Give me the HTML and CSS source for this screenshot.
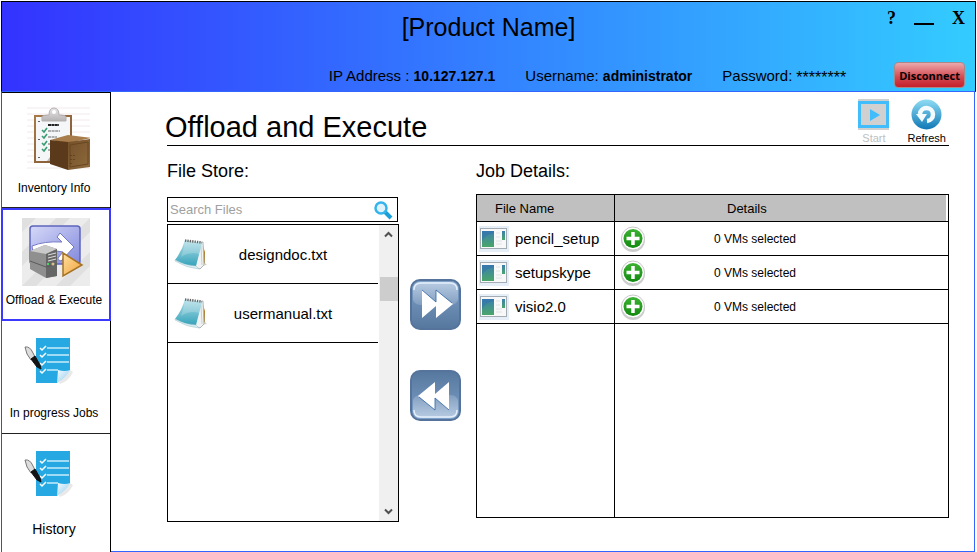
FILE: index.html
```html
<!DOCTYPE html>
<html lang="en">
<head>
<meta charset="utf-8">
<title>Offload and Execute</title>
<link rel="stylesheet" href="styles.css">
</head>
<body>
<svg class="defs" aria-hidden="true">
  <defs>
    <linearGradient id="board" x1="0" y1="0" x2="1" y2="1"><stop offset="0" stop-color="#a97a4a"/><stop offset="1" stop-color="#7e5530"/></linearGradient>
    <linearGradient id="crate" x1="0" y1="0" x2="1" y2="1"><stop offset="0" stop-color="#74502a"/><stop offset="1" stop-color="#8f6a3d"/></linearGradient>
    <linearGradient id="clip" x1="0" y1="0" x2="0" y2="1"><stop offset="0" stop-color="#e8e6e6"/><stop offset="1" stop-color="#b5b2b2"/></linearGradient>
    <linearGradient id="lilac" x1="0" y1="0" x2="1" y2="1"><stop offset="0" stop-color="#d5d9f8"/><stop offset="1" stop-color="#8288dc"/></linearGradient>
    <linearGradient id="amber" x1="0" y1="0" x2="1" y2="1"><stop offset="0" stop-color="#ffe0a0"/><stop offset="1" stop-color="#f0a23a"/></linearGradient>
    <linearGradient id="teal" x1="0" y1="0" x2="0" y2="1"><stop offset="0" stop-color="#b4dfe8"/><stop offset="1" stop-color="#35a3ba"/></linearGradient>
    <linearGradient id="blueball" x1="0" y1="0" x2="0" y2="1"><stop offset="0" stop-color="#8edcf4"/><stop offset="1" stop-color="#0f78b6"/></linearGradient>
    <linearGradient id="pane" x1="0" y1="0" x2="0" y2="1"><stop offset="0" stop-color="#3b7fae"/><stop offset="1" stop-color="#4aa66a"/></linearGradient>
    <linearGradient id="green" x1="0" y1="0" x2="0" y2="1"><stop offset="0" stop-color="#3db233"/><stop offset="1" stop-color="#128a10"/></linearGradient>
    <linearGradient id="steel" x1="0" y1="0" x2="0" y2="1"><stop offset="0" stop-color="#7fa2cb"/><stop offset="1" stop-color="#56779d"/></linearGradient>
    <linearGradient id="gloss" x1="0" y1="0" x2="0" y2="1"><stop offset="0" stop-color="#fff" stop-opacity=".45"/><stop offset="1" stop-color="#fff" stop-opacity=".15"/></linearGradient>
    <linearGradient id="curl" x1="0" y1="0" x2="1" y2="1"><stop offset="0" stop-color="#f4fbff"/><stop offset="1" stop-color="#8ccbed"/></linearGradient>
    <pattern id="hatch" width="24" height="24" patternUnits="userSpaceOnUse" patternTransform="rotate(45)"><rect width="24" height="24" fill="#ececec"/><rect width="10" height="24" fill="#e0e0e0"/></pattern>
    <symbol id="i-jobs" viewBox="0 0 66 56">
      <path d="M36 47l11-12 3 2q-4 9-13 12z" fill="#e9e9e9"/>
      <path d="M13 3h34v32L34 48H13z" fill="#26a8e2"/>
      <path d="M34 48l1-13q7 2 12 0-4 8-13 13z" fill="url(#curl)"/>
      <path d="M24 13h22M24 20h22M24 27h22M24 35h11" stroke="#c9ecfb" stroke-width="1.300"/>
      <path d="M17 13l2 2 4-4M17 20l2 2 4-4M17 28l2 2 4-4M17 36l2 2 4-4" fill="none" stroke="#fff" stroke-width="1.500"/>
      <path d="M2 12q5-1 8 6l2 4-4 3-4-6z" fill="#ddd" stroke="#777"/>
      <path d="M8 24l4-3 5 9 1 4-4-2z" fill="#151515" stroke="#111"/>
    </symbol>
    <symbol id="i-note" viewBox="0 0 34 32">
      <path d="M22 29l11-2-2-2-8 1z" fill="#d8d2c6"/>
      <path d="M28 5l3 9v11l-3 2z" fill="#b08436"/>
      <path d="M24 6l5-2 1 23-4 4-5-2z" fill="#f1f3f3" stroke="#aeb6b8"/>
      <path d="M27 8l1 19" stroke="#c9cfd0"/>
      <path d="M11 2l17 3-6 23q-10 0-21-6 7-9 10-20z" fill="url(#teal)"/>
      <path d="M11 2l17 3-3 11q-9-3-18 3 3-8 4-17z" fill="#fff" opacity=".2"/>
      <path d="M1 22q10 6 21 6l3 3q-13-1-24-8z" fill="#d9edf0" stroke="#a5c7cf" stroke-width=".5"/>
      <path d="M11 2.500l17 2" stroke="#666" stroke-width="2.500" stroke-dasharray="1.300 1.100"/>
    </symbol>
    <symbol id="i-app" viewBox="0 0 30 26">
      <rect width="30" height="26" fill="#e6eef8"/>
      <rect x="1.500" y="2.500" width="26" height="20" fill="#f8f8f8" stroke="#a3abb3"/>
      <rect x="3" y="5" width="12" height="16" fill="url(#pane)"/>
      <path d="M3 5h12v2q-8 1-12 8z" fill="#2f6fae" opacity=".5"/>
      <path d="M17 7h4M17 11h4M17 15h6M17 18h6" stroke="#dfe2e4"/>
      <rect x="23" y="5" width="3" height="9" fill="url(#pane)"/>
    </symbol>
    <symbol id="i-plus" viewBox="0 0 26 26">
      <circle cx="13" cy="14" r="12" fill="#b8b8b8" opacity=".7"/>
      <circle cx="13" cy="12.500" r="11.500" fill="#fff" stroke="#c8c8c8"/>
      <circle cx="13" cy="12.500" r="9.500" fill="url(#green)"/>
      <path d="M13 6v13M6.500 12.500h13" stroke="#fff" stroke-width="3.500"/>
    </symbol>
    <symbol id="i-forward" viewBox="0 0 51 51">
      <rect x="1" y="1" width="49" height="49" rx="9" fill="url(#steel)" stroke="#56749b" stroke-width="2"/>
      <path d="M3 21V11q0-8 8-8h29q8 0 8 8v10q-2 5-8 5H11q-6 0-8-5z" fill="url(#gloss)"/>
      <path d="M4 11q0-7 7-7h29q7 0 7 7" fill="none" stroke="#e4eefa" stroke-width="1.500"/>
      <path d="M12 11l14 12V11l17 14-17 14V27L12 39z" fill="#fff"/>
      <path d="M12 11l14 12V11l16 13" fill="none" stroke="#2f65a3" stroke-width=".8"/>
    </symbol>
  </defs>
</svg>

<div class="window">
  <header class="titlebar">
    <div class="product">
      <h1>[Product Name]</h1>
      <div class="controls">
        <button type="button" aria-label="Help">?</button>
        <button type="button" class="minimise" aria-label="Minimise"></button>
        <button type="button" aria-label="Close">X</button>
      </div>
    </div>
    <div class="session">
      <span>IP Address : <strong>10.127.127.1</strong></span>
      <span>Username: <strong>administrator</strong></span>
      <span class="password">Password: <span class="stars">********</span></span>
      <button type="button" class="disconnect">Disconnect</button>
    </div>
  </header>

  <div class="body">
    <nav class="sidebar">
      <a href="#inventory">
        <svg width="68" height="68" viewBox="-5 1 68 68" aria-hidden="true">
          <path d="M0 4h68M0 10h68M0 16h68M0 22h68M0 28h68M0 34h68M0 40h68M0 46h68M0 52h68M0 58h68M0 64h68" stroke="#f3e9ea"/>
          <path d="M7 11h38v48H7z" fill="url(#board)"/>
          <path d="M9 13h34v44H9z" fill="#f4f6f7"/>
          <path d="M20 57l18-24h5v24z" fill="#8b8b8b" opacity=".6"/>
          <path d="M21 21h11" stroke="#222" stroke-width="2" stroke-dasharray="3 .4"/>
          <path d="M21 27h12M21 33h9M21 40h5M21 46h3" stroke="#666" stroke-dasharray="3 .6"/>
          <path d="M15 26l2 2 3-4M15 32l2 2 3-4M15 39l2 2 3-4M15 45l2 2 3-4" fill="none" stroke="#3a9c72" stroke-width="1.600"/>
          <path d="M12 17v1M12 35v1M12 53v1" stroke="#333" stroke-width="1.500"/>
          <path d="M15 17v-4q0-2 7-2 0-7 5-7t5 7q7 0 7 2v4z" fill="url(#clip)" stroke="#b5b1b1"/>
          <circle cx="27" cy="8" r="2" fill="#fff"/>
          <path d="M23 36l18-5 23 3-23 5z" fill="#a87d4b"/>
          <path d="M23 36l18 2v28l-18-6z" fill="#5b3a1b"/>
          <path d="M41 38l22-3v28l-22 3z" fill="url(#crate)"/>
          <path d="M43 41l18-3v22l-18 3z" fill="none" stroke="#694621"/>
          <path d="M44 51v1M44 55v1M44 59v1M47 51v1M47 55v1" stroke="#4a2f14"/>
        </svg>
        <span>Inventory Info</span>
      </a>
      <a href="#offload" class="active" aria-current="page">
        <svg width="68" height="68" viewBox="0 0 68 68" aria-hidden="true">
          <rect width="68" height="68" fill="url(#hatch)"/>
          <rect x="8" y="8" width="50" height="38" rx="3" fill="url(#lilac)" stroke="#5d65bd" stroke-width="1.500"/>
          <path d="M10 28q12-5 30-4l-5-5 3-4 14 14-13 14q-4-1-3-3l5-6q-14-3-30 1z" fill="#fff" stroke="#7379c4"/>
          <path d="M8 33l15-6 12 4v27l-11 2-16-9z" fill="#8f8f8f"/>
          <path d="M8 33l15-6 12 4-11 5z" fill="#c9c9c9"/>
          <path d="M24 36l11-5v27l-11 2z" fill="#666"/>
          <path d="M26 37l8-2M26 40l8-2M26 43l8-2" stroke="#ddd"/>
          <path d="M8 43l16 6 11-3" fill="none" stroke="#5b5b5b"/>
          <rect x="25" y="45" width="2" height="2" fill="#45d55b"/>
          <circle cx="31" cy="46" r="1.500" fill="#d8c08c"/>
          <path d="M41 35l19 12-19 11z" fill="url(#amber)" stroke="#a67325" stroke-width="1.500"/>
        </svg>
        <span>Offload &amp; Execute</span>
      </a>
      <a href="#progress">
        <svg width="66" height="56" aria-hidden="true"><use href="#i-jobs"/></svg>
        <span>In progress Jobs</span>
      </a>
      <a href="#history" class="large">
        <svg width="66" height="56" aria-hidden="true"><use href="#i-jobs"/></svg>
        <span>History</span>
      </a>
    </nav>

    <main>
      <div class="heading">
        <h2>Offload and Execute</h2>
        <div class="tools">
          <button type="button" disabled>
            <svg width="31" height="31" viewBox="0 0 31 31" aria-hidden="true"><path d="M0 0h31v31H0z" fill="#d0d0d0"/><rect x="1.500" y="3.500" width="28" height="24" fill="none" stroke="#42bdfb" stroke-width="3"/><path d="M12 10l10 6-10 6z" fill="#42bdfb"/></svg>
            Start
          </button>
          <button type="button">
            <svg width="31" height="31" viewBox="0 0 31 31" aria-hidden="true"><circle cx="15.500" cy="15.500" r="15" fill="url(#blueball)"/><path d="M9 15a6.500 6.500 0 1 1 7 7" fill="none" stroke="#f4fbfe" stroke-width="4.500"/><path d="M5 15h11l-5 8z" fill="#f4fbfe"/></svg>
            Refresh
          </button>
        </div>
      </div>

      <div class="panels">
        <section class="store">
          <h3><label for="search">File Store:</label></h3>
          <div class="search">
            <input id="search" type="text" placeholder="Search Files">
            <svg width="20" height="20" viewBox="0 0 20 20" aria-hidden="true"><path d="M12 12l6 6" stroke="#1b9fd8" stroke-width="4"/><circle cx="8" cy="8" r="5.500" fill="#e0f3fd" stroke="#35b4ec" stroke-width="2.500"/></svg>
          </div>
          <div class="listbox">
            <ul>
              <li><svg width="34" height="32" aria-hidden="true"><use href="#i-note"/></svg><span>designdoc.txt</span></li>
              <li><svg width="34" height="32" aria-hidden="true"><use href="#i-note"/></svg><span>usermanual.txt</span></li>
            </ul>
            <div class="scrollbar" aria-hidden="true">
              <svg width="9" height="7" viewBox="0 0 9 7"><path d="M1 5.500L4.500 2 8 5.500" fill="none" stroke="#505050" stroke-width="2"/></svg>
              <div class="thumb"></div>
              <svg width="9" height="7" viewBox="0 0 9 7"><path d="M1 1.500L4.500 5 8 1.500" fill="none" stroke="#505050" stroke-width="2"/></svg>
            </div>
          </div>
        </section>

        <div class="transfer">
          <button type="button" aria-label="Add to job">
            <svg width="51" height="51"><use href="#i-forward"/></svg>
          </button>
          <button type="button" aria-label="Remove from job">
            <svg width="51" height="51"><g transform="rotate(180 25.500 25.500)"><use href="#i-forward"/></g></svg>
          </button>
        </div>

        <section class="jobs">
          <h3 id="jobs-title">Job Details:</h3>
          <table aria-labelledby="jobs-title">
            <thead><tr><th scope="col">File Name</th><th scope="col">Details</th></tr></thead>
            <tbody>
              <tr><td><div class="file"><svg width="30" height="26" aria-hidden="true"><use href="#i-app"/></svg>pencil_setup</div></td><td><div class="vms"><button type="button" aria-label="Add VMs to pencil_setup"><svg width="26" height="26"><use href="#i-plus"/></svg></button>0 VMs selected</div></td></tr>
              <tr><td><div class="file"><svg width="30" height="26" aria-hidden="true"><use href="#i-app"/></svg>setupskype</div></td><td><div class="vms"><button type="button" aria-label="Add VMs to setupskype"><svg width="26" height="26"><use href="#i-plus"/></svg></button>0 VMs selected</div></td></tr>
              <tr><td><div class="file"><svg width="30" height="26" aria-hidden="true"><use href="#i-app"/></svg>visio2.0</div></td><td><div class="vms"><button type="button" aria-label="Add VMs to visio2.0"><svg width="26" height="26"><use href="#i-plus"/></svg></button>0 VMs selected</div></td></tr>
              <tr class="rest"><td></td><td></td></tr>
            </tbody>
          </table>
        </section>
      </div>
    </main>
  </div>
</div>
</body>
</html>
```
FILE: styles.css
```css
* { box-sizing: border-box; }

body {
  margin: 0;
  background: #fff;
  color: #000;
  font-family: "Liberation Sans", Arial, sans-serif;
  font-size: 15px;
}

h1, h2, h3, ul { margin: 0; padding: 0; font-weight: 400; }
svg { display: block; flex: none; }
button {
  margin: 0;
  padding: 0;
  border: 0;
  background: none;
  color: inherit;
  font: inherit;
}
.defs { position: absolute; width: 0; height: 0; }

.window {
  display: flex;
  flex-direction: column;
  min-height: 100vh;
  padding: 1px 1px 0 1px;
}

/* Title bar */
.titlebar {
  display: flex;
  flex-direction: column;
  justify-content: space-between;
  height: 91px;
  padding: 7px 10px 3px;
  border: 1px solid #000;
  border-bottom: 1px solid #3366ff;
  background: linear-gradient(to right, #3333ff, #3366ff 33%, #3399ff 66%, #33ccff);
}
.product {
  display: grid;
  grid-template-columns: 1fr auto 1fr;
}
.product h1 {
  grid-column: 2;
  font-size: 25px;
  line-height: 36px;
}
.controls {
  display: flex;
  justify-content: flex-end;
  align-items: flex-start;
  gap: 18px;
  font: bold 18px/18px "Liberation Serif", "Times New Roman", serif;
}
.minimise {
  width: 20px;
  height: 16px;
  border-bottom: 2px solid #000;
}
.session {
  display: flex;
  justify-content: flex-end;
  align-items: center;
  gap: 30px;
  line-height: 20px;
}
.session strong { font-size: 14px; }
.password { display: flex; gap: 4px; padding-right: 18px; }
.stars { font-size: 16px; line-height: 24px; height: 20px; }
.disconnect {
  height: 26px;
  padding: 0 4px;
  border: 1px solid #a88;
  border-radius: 4px;
  background: linear-gradient(#eaa9ad, #d4474e 60%, #c4202c);
  font: bold 11px "Open Sans", sans-serif;
}
.session > span { padding-top: 2px; }

/* Navigation */
.body { flex: 1; display: flex; margin-right: 1px; }
.sidebar {
  display: flex;
  flex-direction: column;
  flex: none;
  width: 110px;
  border-right: 1px solid #000;
  border-left: 1px solid #555;
}
.sidebar a {
  display: flex;
  flex-direction: column;
  align-items: center;
  justify-content: space-between;
  height: 113px;
  padding: 14px 0 13px;
  border-bottom: 1px solid #222;
  color: #000;
  font-size: 12px;
  line-height: 14px;
  text-decoration: none;
}
.sidebar a:first-child { height: 116px; border-top: 1px solid #000; padding: 12px 0; }
.sidebar a.active {
  padding: 8px 0 12px;
  border: 2px solid #3a3aff;
  margin: 0 -1px;
}
.sidebar a.large { flex: 1; border-bottom: 0; font-size: 14px; padding-bottom: 16px; }
.sidebar span { padding-right: 4px; white-space: nowrap; }

/* Main area */
main {
  flex: 1;
  display: flex;
  flex-direction: column;
  min-width: 0;
  padding: 0 25px 29px 56px;
  border-right: 1px solid #3366ff;
  border-bottom: 1px solid #3366ff;
}
.heading {
  display: flex;
  justify-content: space-between;
  align-items: flex-end;
  height: 54px;
  border-bottom: 1px solid #000;
}
.heading h2 { font-size: 29px; line-height: 36px; margin-left: -2px; }
.tools { display: flex; gap: 18px; padding-right: 3px; font-size: 11px; line-height: 14px; }
.tools button {
  display: flex;
  flex-direction: column;
  align-items: center;
  gap: 1px;
}
.tools button:disabled { color: #c0c0c0; }

.panels {
  flex: 1;
  display: grid;
  grid-template-columns: 232px 51px 1fr;
}
.panels h3 { font-size: 18px; line-height: 20px; padding-top: 15px; }
.store, .jobs { display: flex; flex-direction: column; }
.search {
  display: flex;
  align-items: center;
  height: 25px;
  margin: 16px 1px 2px 0;
  padding: 0 4px 0 2px;
  border: 1px solid #000;
}
.search input {
  flex: 1;
  min-width: 0;
  padding: 0;
  border: 0;
  outline: 0;
  background: none;
  font: 13px "Liberation Sans", Arial, sans-serif;
}
.search input::placeholder { color: #a0a0a0; opacity: 1; }
.listbox { flex: 1; display: flex; border: 1px solid #000; }
.listbox ul { flex: 1; list-style: none; }
.listbox li {
  display: flex;
  align-items: center;
  height: 59px;
  padding: 0 20px 0 6px;
  border-bottom: 1px solid #000;
}
.listbox span { flex: 1; text-align: center; }
.scrollbar {
  display: flex;
  flex-direction: column;
  align-items: center;
  justify-content: space-between;
  width: 19px;
  margin-left: 1px;
  padding: 6px 0;
  background: #f0f0f0;
}
.thumb { width: 18px; height: 24px; margin-top: 39px; margin-bottom: auto; background: #cdcdcd; }

.transfer {
  display: flex;
  flex-direction: column;
  gap: 40px;
  padding: 133px 0 0 11px;
}
.jobs { padding: 0 0 4px 26px; }
.jobs h3 { margin-bottom: 13px; }
.jobs table {
  flex: 1;
  width: 100%;
  border-collapse: collapse;
  border: 1px solid #000;
  table-layout: fixed;
}
th, td { padding: 0; border: 1px solid #000; }
th {
  height: 27px;
  background: #c0c0c0;
  font-size: 13px;
  font-weight: 400;
  text-align: left;
}
th:first-child { width: 138px; padding-left: 18px; }
th:last-child { padding-left: 112px; box-shadow: inset -2px 0 #fff; }
tbody tr { height: 34px; }
tbody tr.rest { height: auto; }
.file { display: flex; align-items: center; gap: 6px; padding-left: 2px; }
.vms { display: flex; align-items: center; gap: 68px; padding-left: 5px; font-size: 12px; }
```
